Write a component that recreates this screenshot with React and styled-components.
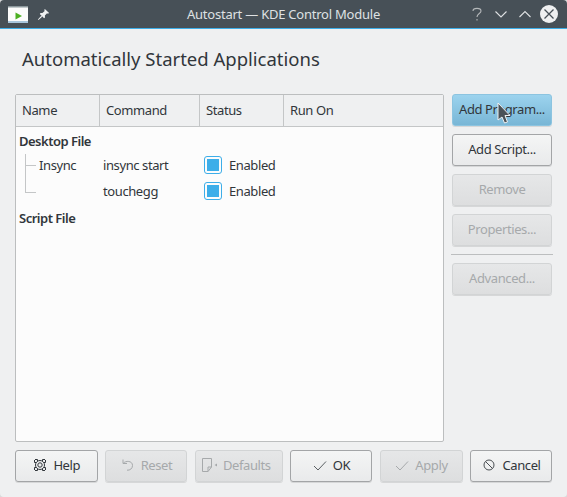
import React from "react";
import styled, { createGlobalStyle } from "styled-components";

const Global = createGlobalStyle`
  html, body { margin: 0; padding: 0; background: #d9dadb; }
  body { font-family: "Noto Sans", sans-serif; font-size: 13px; letter-spacing: -0.4px; color: #31363b; }
  #root { width: 567px; height: 497px; overflow: hidden; }
`;

const Window = styled.div`
  width: 567px; height: 497px; background: #eff0f1; display: flex; flex-direction: column; position: relative;
  border-radius: 4px; overflow: hidden;
`;
const TitleBar = styled.div`
  height: 28px; background: #475057; border-bottom: 1px solid #3daee9; display: flex; align-items: center; flex: none;
  color: #eff0f1; padding: 0 9px 0 8px; position: relative;
`;
const TitleText = styled.div`
  position: absolute; left: 0; right: 0; text-align: center; font-size: 13px; letter-spacing: -0.23px; top: 5px; line-height: 18px; color: #dfe1e3;
`;
const AppIcon = styled.svg`width: 20px; height: 17px; display: block; flex: none;`;
const PinIcon = styled.svg`width: 13px; height: 13px; margin-left: 9px; display: block; flex: none;`;
const WinControls = styled.div`
  margin-left: auto; display: flex; align-items: center; gap: 10px; position: relative;
`;
const WinIcon = styled.svg`width: 14px; height: 14px; display: block;`;
const CloseIcon = styled.svg`width: 18px; height: 18px; display: block; margin-left: -2px;`;
const Body = styled.div`
  flex: 1; display: flex; flex-direction: column; padding: 0 14px 15px 15px; min-height: 0;
`;
const Heading = styled.h1`
  margin: 0; font-weight: 400; font-size: 18.5px; letter-spacing: 0; line-height: 24px; color: #31363b; padding: 18px 0 0 7px; height: 65px; box-sizing: border-box; flex: none;
`;
const Main = styled.div`flex: 1; display: flex; gap: 7px; min-height: 0;`;
const Table = styled.div`
  flex: 1; background: #fcfcfc; border: 1px solid #bcbebf; border-radius: 2px; display: flex; flex-direction: column;
`;
const Header = styled.div`
  display: grid; grid-template-columns: 84px 100px 84px 1fr; height: 31px; background: #eff0f1; border-bottom: 1px solid #c4c6c7;
`;
const HeaderCell = styled.div`
  padding-left: 6px; line-height: 31px; border-right: ${p => (p.$last ? "0" : "1px solid #c4c6c7")}; color: #31363b;
`;
const Rows = styled.div`display: flex; flex-direction: column;`;
const Group = styled.div`font-weight: 600; height: ${p => p.$h}px; line-height: ${p => p.$lh}px; padding-left: 3px; color: #31363b; letter-spacing: -0.5px;`;
const Row = styled.div`
  display: grid; grid-template-columns: 84px 100px 1fr; height: 26px; align-items: center;
`;
const NameCell = styled.div`padding-left: 23px; position: relative; height: 26px; line-height: 26px;`;
const Branch = styled.span`
  position: absolute; left: 9px; top: ${p => (p.$last ? "0" : "2px")}; width: 10px;
  height: ${p => (p.$last ? "15px" : "24px")};
  border-left: 1px solid #c4c6c7;
  &::after { content: ""; position: absolute; left: 0; width: 10px; border-top: 1px solid #c4c6c7; top: ${p => (p.$last ? "14px" : "11px")}; }
`;
const Cell = styled.div`padding-left: 3px; line-height: 26px;`;
const StatusCell = styled.div`display: flex; align-items: center; gap: 7px; padding-left: 4px;`;
const Check = styled.span`
  width: 18px; height: 18px; box-sizing: border-box; border: 1px solid #3daee9; border-radius: 3px; background: #fcfcfc; display: flex; align-items: center; justify-content: center;
  &::before { content: ""; width: 12px; height: 12px; background: #3daee9; }
`;
const Side = styled.div`width: 102px; display: flex; flex-direction: column; flex: none;`;
const Btn = styled.div`
  height: 32px; box-sizing: border-box; border-radius: 3px; display: flex; align-items: center; justify-content: center; gap: 5px;
  padding-bottom: 2px;
  flex: none; width: ${p => p.$w || "auto"};
  border: 1px solid ${p => (p.$disabled ? "#d2d4d5" : p.$active ? "#8cc4e0" : "#a3a5a7")};
  background: ${p => p.$disabled ? "linear-gradient(#e6e7e8,#dddedf)" : p.$active ? "linear-gradient(#9cd3ee,#78b6d6)" : "linear-gradient(#f4f5f5,#e9eaeb)"};
  color: ${p => (p.$disabled ? "#a6a9ab" : "#31363b")};
  box-shadow: 0 1px 0 rgba(0,0,0,0.1);
`;
const SideBtn = styled(Btn)`margin: 0 1px 8px;`;
const Sep = styled.div`height: 1px; background: #bcbebf; margin: 0 0 8px; flex: none;`;
const Footer = styled.div`display: flex; justify-content: space-between; margin-top: 8px; padding-right: 1px; flex: none;`;
const BtnIcon = styled.svg`width: 16px; height: 16px; display: block; flex: none;`;
const DefaultsIcon = styled.svg`width: 19px; height: 16px; display: block; flex: none; margin: 0 -2.5px 0 -5px;`;
const Cursor = styled.svg`position: absolute; left: 496px; top: 102px; width: 16px; height: 24px;`;

export default function App() {
  return (
    <Window>
      <Global />
      <TitleBar>
        <AppIcon viewBox="0 0 20 17">
          <rect x="0" y="0" width="20" height="17" fill="#fcfcfc" />
          <rect x="0" y="0" width="20" height="1.5" fill="#8b979c" />
          <rect x="0" y="15" width="20" height="2" fill="#a9c6dc" />
          <path d="M7.5 6.5 L14 10 L7.5 13.5 Z" fill="#4caf22" />
        </AppIcon>
        <PinIcon viewBox="0 0 14 14">
          <path d="M8.5 1 L13 5.5 L11.8 6.2 L10.8 5.7 L8.5 8.2 L8.6 10.2 L7.6 11 L3 6.4 L3.8 5.4 L5.8 5.5 L8.3 3.2 L7.8 2.2 Z M4.6 8.4 L5.6 9.4 L1.6 13 L1 12.4 Z" fill="#eff0f1" />
        </PinIcon>
        <TitleText>Autostart — KDE Control Module</TitleText>
        <WinControls>
          <WinIcon viewBox="0 0 14 14" fill="none" stroke="#b5b8ba" strokeWidth="1.1">
            <path d="M3 4 C3 0.5 11 0.5 11 4 C11 6.5 7 6.5 7 10" />
            <path d="M7 12 V13.4" />
          </WinIcon>
          <WinIcon viewBox="0 0 14 14" fill="none" stroke="#dfe1e3" strokeWidth="1.1">
            <path d="M1.5 4.5 L7 10 L12.5 4.5" />
          </WinIcon>
          <WinIcon viewBox="0 0 14 14" fill="none" stroke="#dfe1e3" strokeWidth="1.1">
            <path d="M1.5 10 L7 4.5 L12.5 10" />
          </WinIcon>
          <CloseIcon viewBox="0 0 18 18">
            <circle cx="9" cy="9" r="9" fill="#eff0f1" />
            <path d="M4.5 4.5 L13.5 13.5 M13.5 4.5 L4.5 13.5" stroke="#475057" strokeWidth="1.3" />
          </CloseIcon>
        </WinControls>
      </TitleBar>
      <Body>
        <Heading>Automatically Started Applications</Heading>
        <Main>
          <Table>
            <Header>
              <HeaderCell>Name</HeaderCell>
              <HeaderCell>Command</HeaderCell>
              <HeaderCell>Status</HeaderCell>
              <HeaderCell $last>Run On</HeaderCell>
            </Header>
            <Rows>
              <Group $h={25} $lh={29}>Desktop File</Group>
              <Row>
                <NameCell><Branch />Insync</NameCell>
                <Cell>insync start</Cell>
                <StatusCell><Check />Enabled</StatusCell>
              </Row>
              <Row>
                <NameCell><Branch $last /></NameCell>
                <Cell>touchegg</Cell>
                <StatusCell><Check />Enabled</StatusCell>
              </Row>
              <Group $h={27} $lh={29}>Script File</Group>
            </Rows>
          </Table>
          <Side>
            <SideBtn $active>Add Program...</SideBtn>
            <SideBtn>Add Script...</SideBtn>
            <SideBtn $disabled>Remove</SideBtn>
            <SideBtn $disabled>Properties...</SideBtn>
            <Sep />
            <SideBtn $disabled>Advanced...</SideBtn>
          </Side>
        </Main>
        <Footer>
          <Btn $w="82.5px">
            <BtnIcon viewBox="0 0 16 16" fill="none" stroke="#31363b" strokeWidth="1">
              <circle cx="8" cy="8" r="4.5" />
              <circle cx="8" cy="8" r="2.2" />
              <path d="M3 2.5 H5.5 V4 M13 2.5 H10.5 V4 M3 13.5 H5.5 V12 M13 13.5 H10.5 V12 M2.5 3 V5.5 H4 M13.5 3 V5.5 H12 M2.5 13 V10.5 H4 M13.5 13 V10.5 H12" />
            </BtnIcon>
            Help
          </Btn>
          <Btn $w="82px" $disabled>
            <BtnIcon viewBox="0 0 16 16" fill="none" stroke="#a6a9ab" strokeWidth="1">
              <path d="M3 2.5 V6.5 H7 M3.3 6.3 C5.5 3.5 12.5 3.5 12.5 8.5 C12.5 11.5 10 13.5 7 13.2" />
            </BtnIcon>
            Reset
          </Btn>
          <Btn $w="88px" $disabled>
            <DefaultsIcon viewBox="0 0 19 16" fill="none" stroke="#a6a9ab" strokeWidth="1">
              <path d="M1.5 1.5 H10.5 V10 L7 14.5 H1.5 Z M10.5 10 H7 V14.5" />
              <path d="M16 6.5 L13.5 8 L16 9.5 Z" fill="#a6a9ab" stroke="none" />
            </DefaultsIcon>
            Defaults
          </Btn>
          <Btn $w="82px">
            <BtnIcon viewBox="0 0 16 16" fill="none" stroke="#5a5f63" strokeWidth="1">
              <path d="M2 9 L6 13 L14 4.5" />
            </BtnIcon>
            OK
          </Btn>
          <Btn $w="83px" $disabled>
            <BtnIcon viewBox="0 0 16 16" fill="none" stroke="#a6a9ab" strokeWidth="1">
              <path d="M2 9 L6 13 L14 4.5" />
            </BtnIcon>
            Apply
          </Btn>
          <Btn $w="82px">
            <BtnIcon viewBox="0 0 16 16" fill="none" stroke="#4a4f53" strokeWidth="1">
              <circle cx="8" cy="8" r="5" />
              <path d="M4.5 4.5 L11.5 11.5" />
            </BtnIcon>
            Cancel
          </Btn>
        </Footer>
      </Body>
      <Cursor viewBox="0 0 16 24">
        <path d="M2 1 L14 13.5 L9 13.5 L11.5 20 L8.5 21 L6 15 L2 18 Z" fill="#4a5258" stroke="#eff0f1" strokeWidth="1" />
      </Cursor>
    </Window>
  );
}
